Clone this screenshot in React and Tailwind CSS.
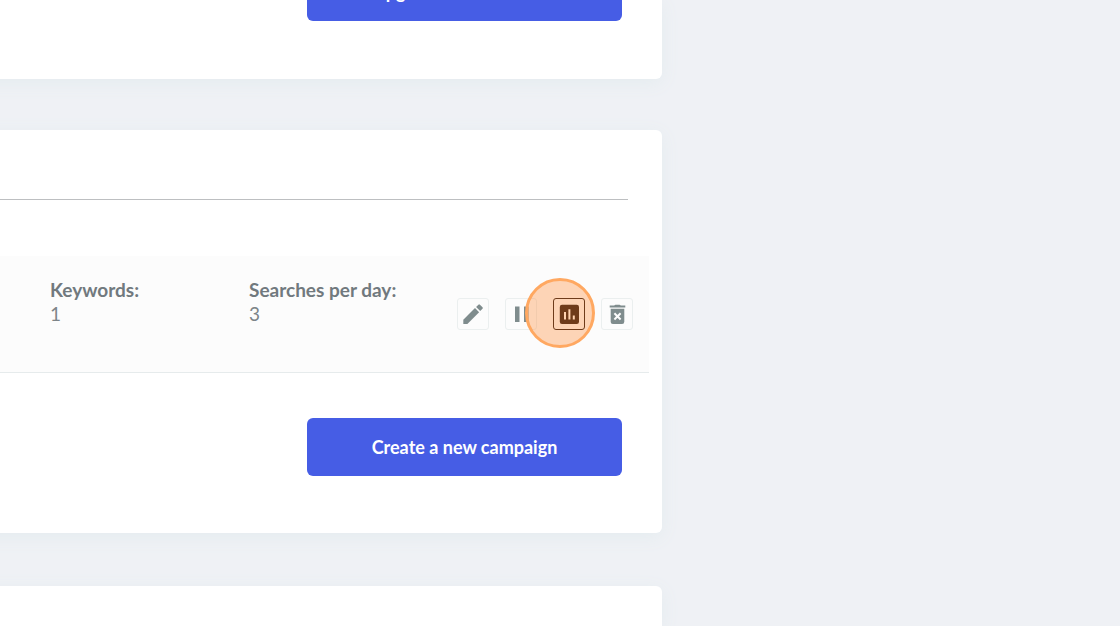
import clsx from "clsx";

const stats = [
    { label: "Keywords:", value: 1 },
    { label: "Searches per day:", value: 3 },
];

// ICONS
function PencilIcon() {
    return (
        <svg viewBox="0 0 20 20" className="w-5 h-5" fill="currentColor" aria-hidden="true">
            <path d="M0.3 19.9V15.8L12 4.1L16.1 8.2L4.4 19.9Z" />
            <path d="M13.1 3L15.4 0.7Q16.1 0 16.9 0.7L19.5 3.3Q20.2 4.1 19.5 4.8L17.2 7.1Z" />
        </svg>
    );
}

function PauseIcon() {
    return (
        <svg viewBox="0 0 20 20" className="w-5 h-5" fill="currentColor" aria-hidden="true">
            <path d="M4 2.6H8.5V18H4ZM13 2.6H17.5V18H13Z" />
        </svg>
    );
}

function ChartIcon() {
    return (
        <svg viewBox="0 0 20 20" className="w-5 h-5" aria-hidden="true">
            <rect x="0.8" y="0.8" width="19.2" height="19.2" rx="2.2" fill="currentColor" />
            <path d="M5 8H7V15.4H5ZM9.4 5.2H11.4V15.4H9.4ZM13.8 11.6H15.8V15.4H13.8Z" fill="#ffd3b0" />
        </svg>
    );
}

function TrashIcon() {
    return (
        <svg viewBox="0 0 20 20" className="w-5 h-5" aria-hidden="true">
            <path d="M2.7 1.6H7.3Q7.7 0.7 8.6 0.7H12.4Q13.3 0.7 13.7 1.6H18.3V3.6H2.7Z" fill="currentColor" />
            <path d="M3.7 4.8H17.3V17.8Q17.3 20 15.1 20H5.9Q3.7 20 3.7 17.8Z" fill="currentColor" />
            <path d="M7.4 9.3L13.6 15.5M13.6 9.3L7.4 15.5" stroke="#fcfcfc" strokeWidth="2" />
        </svg>
    );
}

function IconButton({ label, active, children }) {
    return (
        <button
            type="button"
            aria-label={label}
            className={clsx(
                "w-8 h-8 flex items-center justify-center rounded-[3px] border",
                active ? "border-[#6e3b1a] text-[#6e3b1a]" : "border-[#ebefef] text-[#7f8c8d]"
            )}
        >
            {children}
        </button>
    );
}

function PrimaryButton({ children }) {
    return (
        <button
            type="button"
            className="w-[315px] h-[58px] shrink-0 rounded-md bg-[#465de5] text-white text-lg leading-6 font-bold"
        >
            {children}
        </button>
    );
}

export default function App() {
    return (
        <div className="min-h-screen flex overflow-hidden bg-[#eff1f5] font-['Lato',sans-serif]">
            <main className="flex-1 min-w-0 -ml-6 flex flex-col">

                {/* PLAN */}
                <section className="h-[79px] flex flex-col justify-end items-end pr-10 pb-[58px] bg-white rounded-b-md shadow-[0_4px_18px_#e4ecef]">
                    <PrimaryButton>Upgrade account limits</PrimaryButton>
                </section>

                {/* CAMPAIGNS */}
                <section className="mt-[51px] bg-white rounded-md shadow-[0_4px_18px_#e4ecef]">
                    <div className="h-[70px] mr-[34px] border-b border-[#bdbfc1]" />

                    <div className="mt-14 mr-[13px] h-[117px] flex items-start pl-[74px] pr-4 pt-[22px] bg-[#fcfcfc] border-b border-[#e6ebec]">
                        {stats.map((s) => (
                            <div key={s.label} className="w-[199px] text-[19px] leading-6 text-[#71797e]">
                                <p className="font-bold">{s.label}</p>
                                <p className="text-[#7d8488]">{s.value}</p>
                            </div>
                        ))}

                        {/* ACTIONS */}
                        <div className="ml-auto mt-5 flex gap-4">
                            <IconButton label="Edit"><PencilIcon /></IconButton>
                            <IconButton label="Pause"><PauseIcon /></IconButton>
                            <div className="relative">
                                <span className="absolute -left-7 -top-5 w-[70px] h-[70px] rounded-full border-[3px] border-[#ffa861] bg-[#ff8a33]/35 pointer-events-none" />
                                <div className="relative">
                                    <IconButton label="Statistics" active><ChartIcon /></IconButton>
                                </div>
                            </div>
                            <IconButton label="Delete"><TrashIcon /></IconButton>
                        </div>
                    </div>

                    <div className="flex justify-end pt-[45px] pr-10 pb-[57px]">
                        <PrimaryButton>Create a new campaign</PrimaryButton>
                    </div>
                </section>

                {/* NEXT SECTION */}
                <section className="mt-[53px] flex-1 bg-white rounded-t-md shadow-[0_4px_18px_#e4ecef]" />
            </main>
            <aside className="w-[458px] shrink-0" />
        </div>
    );
}
